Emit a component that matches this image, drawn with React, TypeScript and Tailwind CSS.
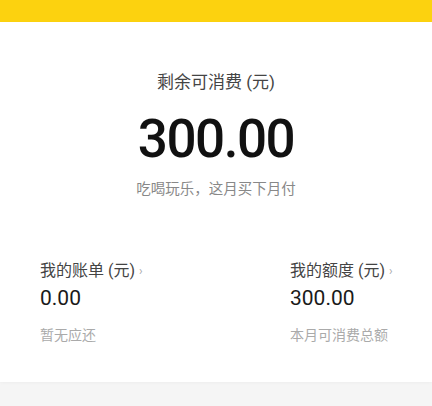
const cjk = "font-['Roboto','Noto_Sans_CJK_SC',sans-serif]";

function Stat({ label, value, note, align }: { label: string; value: string; note: string; align: string }) {
  return (
    <div className={align}>
      <div className="flex items-center text-[16px] leading-[20px] text-[#444]">
        <span>{label}</span>
        <span className="ml-[4px] text-[12px] text-[#aaa]">›</span>
      </div>
      <div className="mt-[4px] text-[21px] leading-[26px] text-[#1a1a1a]">{value}</div>
      <div className="mt-[15px] text-[14px] leading-[18px] text-[#aaa]">{note}</div>
    </div>
  );
}

export default function App() {
  return (
    <div className={`w-[432px] h-[406px] bg-[#f5f5f5] ${cjk}`}>
      <div className="h-[22px] bg-[#fcd20f]" />
      <div className="h-[360px] bg-white pt-[50px] shadow-[0_1px_3px_rgba(0,0,0,0.03)]">
        <div className="text-center text-[17px] leading-[21px] text-[#444]">剩余可消费 (元)</div>
        <div className="mt-[17px] text-center text-[53px] leading-[58px] tracking-[-1.5px] text-[#111] font-medium">300.00</div>
        <div className="mt-[13px] text-center text-[14.5px] leading-[18px] text-[#888]">吃喝玩乐，这月买下月付</div>
        <div className="mt-[62px] flex justify-between pl-[40px] pr-[38px]">
          <Stat label="我的账单 (元)" value="0.00" note="暂无应还" align="w-[120px]" />
          <Stat label="我的额度 (元)" value="300.00" note="本月可消费总额" align="w-[104px]" />
        </div>
      </div>
    </div>
  );
}
